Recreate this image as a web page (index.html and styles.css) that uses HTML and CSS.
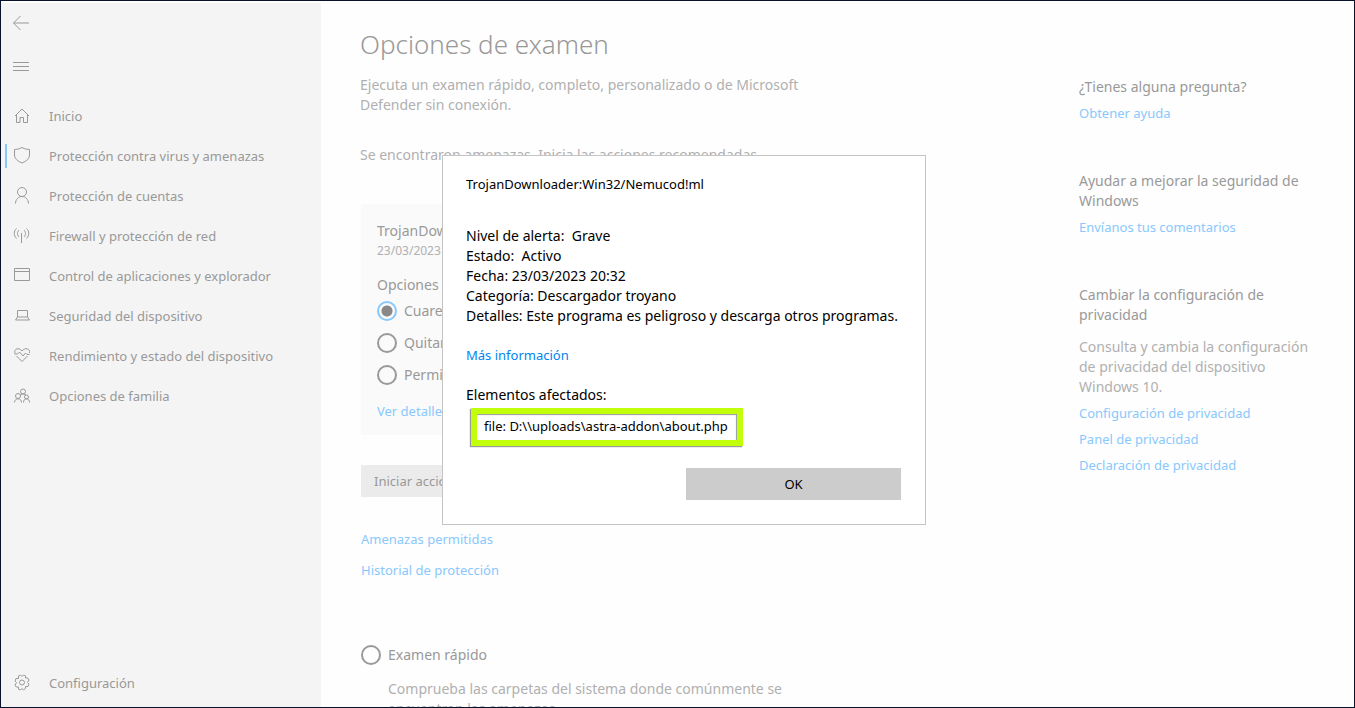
FILE: index.html
```html
<!DOCTYPE html>
<html lang="es">
<head>
    <meta charset="UTF-8">
    <title>Seguridad de Windows</title>
    <link rel="stylesheet" href="styles.css">
</head>
<body>
    <div class="window">
        <nav class="sidebar">
            <button type="button" class="icon-button" aria-label="Atrás">
                <svg class="icon" viewBox="0 0 18 18"><path d="M8.500 2L1.500 9l7 7M1.500 9H17"/></svg>
            </button>
            <button type="button" class="icon-button" aria-label="Menú">
                <svg class="icon" viewBox="0 0 18 18"><path d="M1 4.500h16M1 8.500h16M1 12.500h16"/></svg>
            </button>

            <div class="nav-list">
                <a href="#" class="nav-item">
                    <svg class="icon" viewBox="0 0 18 18"><path d="M2 9l7-7 7 7M3.500 8v7.500h3.500v-5h3.500v5h4V8"/></svg>
                    Inicio
                </a>
                <a href="#" class="nav-item active">
                    <svg class="icon" viewBox="0 0 18 18"><path d="M1.500 2.500Q6 2.500 9 .5Q12 2.500 16.500 2.500V8Q16.500 13 9 16Q1.500 13 1.500 8z"/></svg>
                    Protección contra virus y amenazas
                </a>
                <a href="#" class="nav-item">
                    <svg class="icon" viewBox="0 0 18 18"><circle cx="9" cy="5" r="4.500"/><path d="M2.500 16.500c0-4 3-7 6.500-7s6.500 3 6.500 7"/></svg>
                    Protección de cuentas
                </a>
                <a href="#" class="nav-item">
                    <svg class="icon" viewBox="0 0 18 18"><path d="M8.500 6v10M3.500 1.500C.5 4 .5 8.500 3.500 11.500M6 3c-2 2-2 5 0 7M13.500 1.500c3 2.500 3 7 0 10M11 3c2 2 2 5 0 7"/></svg>
                    Firewall y protección de red
                </a>
                <a href="#" class="nav-item">
                    <svg class="icon" viewBox="0 0 18 18"><path d="M1.500 1.500h15v12h-15zM1.500 4.500h15"/></svg>
                    Control de aplicaciones y explorador
                </a>
                <a href="#" class="nav-item">
                    <svg class="icon" viewBox="0 0 18 18"><path d="M4.500 3.500h10v6.500h-10zM4.500 10l-2 3h14l-2-3"/></svg>
                    Seguridad del dispositivo
                </a>
                <a href="#" class="nav-item">
                    <svg class="icon" viewBox="0 0 18 18"><path d="M2 6.500C.5 1.500 6 0 9 4 12 0 17.500 1.500 16.500 6M3.500 9l5.500 5.500L14.500 9M1.500 7h3l2-2 3.500 4 2.500-3L14 7.500h2.500"/></svg>
                    Rendimiento y estado del dispositivo
                </a>
                <a href="#" class="nav-item">
                    <svg class="icon" viewBox="0 0 18 18"><circle cx="10" cy="4.500" r="2.500"/><circle cx="5" cy="9" r="2.500"/><circle cx="13.500" cy="10" r="2"/><path d="M1.500 15.500c0-5 7-5 7 0M10.500 15.500c0-5 6-5 6 0M7 8.500l2-1.500h2l2 1"/></svg>
                    Opciones de familia
                </a>
            </div>

            <a href="#" class="nav-item settings">
                <svg class="icon" viewBox="0 0 18 18"><circle cx="9" cy="8.500" r="2.500"/><path d="M7.500 1L9 2.500 10.500 1l2 .8V4h2.200L16 6l-1.500 2.500L16 10l-1 2.500h-2.500v2l-2 1.500L9 14.500 7.500 16l-2-.8V13H3.300L2 11l1.500-2.500L2 7l1-2.500h2.500V2z"/></svg>
                Configuración
            </a>
        </nav>

        <main class="content">
            <h1>Opciones de examen</h1>
            <p class="intro">Ejecuta un examen rápido, completo, personalizado o de Microsoft Defender sin conexión.</p>
            <p class="notice">Se encontraron amenazas. Inicia las acciones recomendadas.</p>

            <form class="threat-card">
                <h2>TrojanDownloader:Win32/Nemucod!ml</h2>
                <p class="date">23/03/2023 20:32</p>
                <h2 class="options-title">Opciones de acción:</h2>
                <label class="radio"><input type="radio" name="action" checked> Cuarentena</label>
                <label class="radio"><input type="radio" name="action"> Quitar</label>
                <label class="radio"><input type="radio" name="action"> Permitir</label>
                <a href="#">Ver detalles</a>
            </form>

            <button type="button" class="start-button">Iniciar acciones</button>

            <div class="links">
                <a href="#">Amenazas permitidas</a>
                <a href="#">Historial de protección</a>
            </div>

            <label class="radio scan"><input type="radio" name="scan"> Examen rápido</label>
            <p class="scan-text">Comprueba las carpetas del sistema donde comúnmente se encuentran las amenazas.</p>
        </main>

        <aside class="help">
            <section>
                <h2>¿Tienes alguna pregunta?</h2>
                <a href="#">Obtener ayuda</a>
            </section>
            <section>
                <h2>Ayudar a mejorar la seguridad de Windows</h2>
                <a href="#">Envíanos tus comentarios</a>
            </section>
            <section>
                <h2>Cambiar la configuración de privacidad</h2>
                <p>Consulta y cambia la configuración de privacidad del dispositivo Windows 10.</p>
                <a href="#">Configuración de privacidad</a>
                <a href="#">Panel de privacidad</a>
                <a href="#">Declaración de privacidad</a>
            </section>
        </aside>
    </div>

    <div class="overlay">
        <div class="dialog" role="dialog" aria-labelledby="threatName">
            <h2 id="threatName">TrojanDownloader:Win32/Nemucod!ml</h2>
            <ul class="details">
                <li>Nivel de alerta: &nbsp;Grave</li>
                <li>Estado: &nbsp;Activo</li>
                <li>Fecha: 23/03/2023 20:32</li>
                <li>Categoría: Descargador troyano</li>
                <li>Detalles: Este programa es peligroso y descarga otros programas.</li>
            </ul>
            <a href="#">Más información</a>
            <p class="affected">Elementos afectados:</p>
            <p class="file">file: D:\\uploads\astra-addon\about.php</p>
            <button type="button" class="ok-button">OK</button>
        </div>
    </div>
</body>
</html>
```

FILE: styles.css
```css
* { box-sizing: border-box; }
body { margin: 0; font-family: "Noto Sans", "Open Sans", sans-serif; font-size: 14px; line-height: 20px; color: #999; background: #fefefe; }
h1, h2, p, ul { margin: 0; padding: 0; font-weight: normal; }
h2 { font-size: 14px; line-height: 20px; }
a { color: #88c8fd; font-size: 13px; text-decoration: none; }
button { font: inherit; border: none; cursor: pointer; }

.window { display: grid; grid-template-columns: 320px 1fr 275px; height: 100vh; border: 1px solid #08132b; overflow: hidden; }

/* sidebar */
.sidebar { display: flex; flex-direction: column; margin-top: 2px; background: #f4f4f4; }
.icon { width: 18px; height: 18px; flex: none; fill: none; stroke: #999; stroke-width: 1; }
.icon-button { display: flex; align-items: center; height: 44px; padding: 0 11px 4px; background: none; }
.nav-list { margin-top: 5px; }
.nav-item { display: flex; align-items: center; gap: 18px; height: 40px; padding-left: 8px; border-left: 4px solid transparent; color: #999; }
.nav-item.active { border-left: none; padding-left: 4px; }
.nav-item.active::before { content: ""; width: 2px; height: 24px; margin-right: -12px; background: #88c8fd; }
.settings { margin-top: auto; margin-bottom: 16px; }

/* scan options */
.content { min-width: 0; padding: 25px 0 0 39px; }
h1 { font-size: 26px; line-height: 36px; font-weight: 300; }
.intro { max-width: 460px; margin-top: 13px; color: #b0b0b0; }
.notice { margin-top: 30px; color: #b0b0b0; }
.threat-card { display: flex; flex-direction: column; max-width: 460px; margin: 39px 0 0 1px; padding: 17px 16px 14px; background: #fafafa; }
.date { color: #b0b0b0; font-size: 12px; }
.options-title { margin-top: 14px; }
.radio { display: flex; align-items: center; gap: 7px; height: 32px; }
.radio input { appearance: none; width: 20px; height: 20px; margin: 0; border: 2px solid #999; border-radius: 50%; }
.radio input:checked { border-color: #88c8fd; background: radial-gradient(circle, #888 5px, transparent 6px); }
.threat-card a { margin-top: 10px; }
.start-button { height: 32px; margin: 30px 0 0 1px; padding: 0 13px; background: #ebebeb; color: #999; font-size: 13px; }
.links { display: flex; flex-direction: column; gap: 11px; margin: 32px 0 0 1px; }
.scan { margin: 59px 0 0 1px; }
.scan-text { max-width: 440px; margin: 8px 0 0 1px; padding-left: 27px; color: #b0b0b0; }

/* help column */
.help { padding: 76px 40px 0 0; }
.help section { margin-bottom: 48px; }
.help p { margin: 12px 0 6px; color: #b0b0b0; }
.help a { display: block; margin-top: 6px; }

/* threat details */
.overlay { position: fixed; inset: 0; display: flex; align-items: center; justify-content: center; padding: 0 0 28px 13px; }
.dialog { display: flex; flex-direction: column; width: 484px; padding: 18px 24px 24px 23px; border: 1px solid #c4c4c4; background: #fff; color: #000; }
.dialog h2 { font-size: 13px; }
.dialog a { margin-top: 19px; color: #0084f0; }
.details { margin-top: 32px; list-style: none; white-space: nowrap; }
.affected { margin-top: 20px; }
.file { align-self: flex-start; margin: 3px 0 0 5px; padding: 2px 9px 4px 7px; border: 6px solid #c1ff0a; box-shadow: -1px 1px 1px #999, inset -1px 1px 1px #999; font-size: 13px; }
.ok-button { align-self: flex-end; width: 215px; height: 32px; margin-top: 22px; background: #ccc; color: #000; font-size: 13px; }
```
